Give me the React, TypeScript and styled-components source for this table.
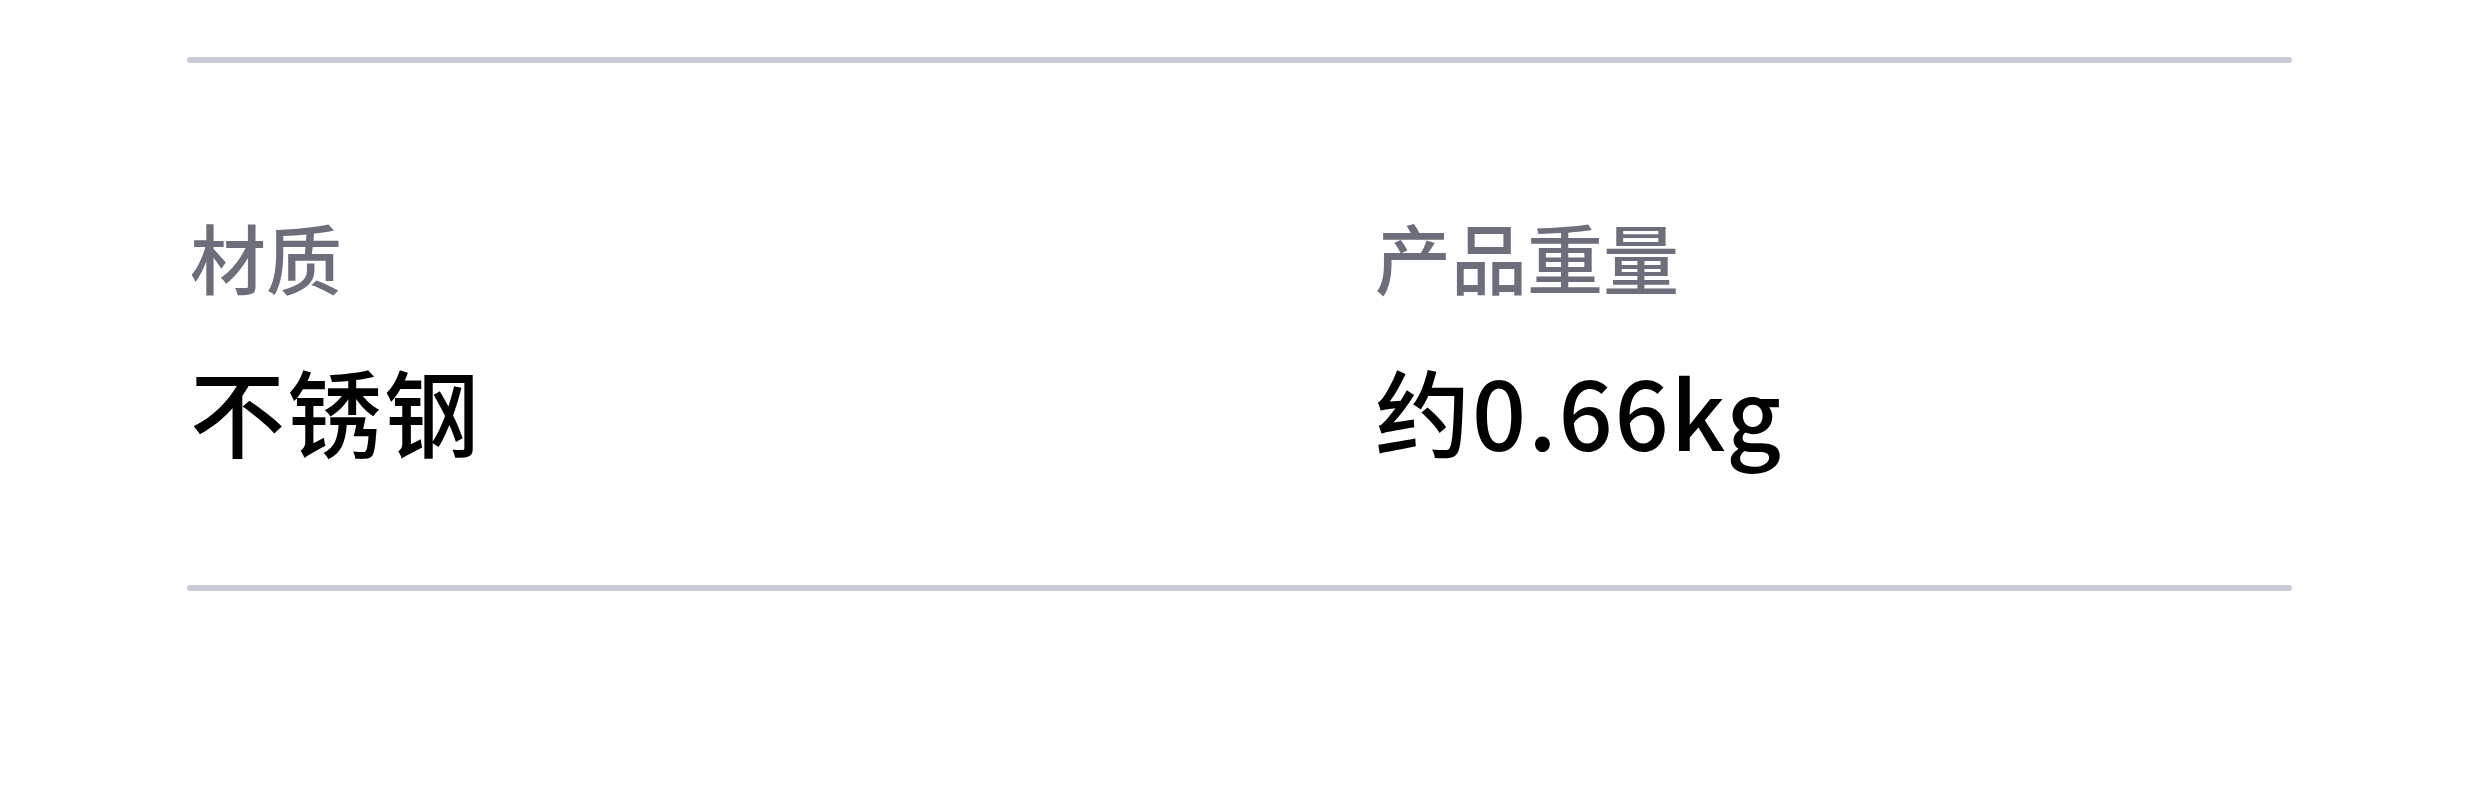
import styled, { createGlobalStyle } from 'styled-components'

const GlobalStyle = createGlobalStyle`
  html, body {
    margin: 0;
    padding: 0;
    background: #ffffff;
  }
  body {
    font-family: "Noto Sans CJK SC", "Noto Sans", sans-serif;
  }
`

const Page = styled.div`
  width: 2480px;
  height: 792px;
  padding: 57px 0 0 187px;
  box-sizing: border-box;
`

const Panel = styled.section`
  width: 2105px;
`

const Divider = styled.hr`
  margin: 0;
  border: none;
  height: 6px;
  border-radius: 3px;
  background: #c8ccd5;
`

const SpecGrid = styled.div`
  display: grid;
  grid-template-columns: 1185px 1fr;
  padding: 155px 0 0 3px;
  height: 522px;
  box-sizing: border-box;
`

const Spec = styled.div`
  display: flex;
  flex-direction: column;
  gap: 68px;
`

const Label = styled.div`
  font-size: 76px;
  font-weight: 500;
  line-height: 1;
  color: #6c6f7b;
`

const Value = styled.div`
  font-size: 95px;
  font-weight: 500;
  line-height: 1;
  letter-spacing: 2px;
  color: #000000;
`

const specs = [
  { label: '材质', value: '不锈钢' },
  { label: '产品重量', value: '约0.66kg' },
]

export default function App() {
  return (
    <Page>
      <GlobalStyle />
      <Panel>
        <Divider />
        <SpecGrid>
          {specs.map((s) => (
            <Spec key={s.label}>
              <Label>{s.label}</Label>
              <Value>{s.value}</Value>
            </Spec>
          ))}
        </SpecGrid>
        <Divider />
      </Panel>
    </Page>
  )
}
